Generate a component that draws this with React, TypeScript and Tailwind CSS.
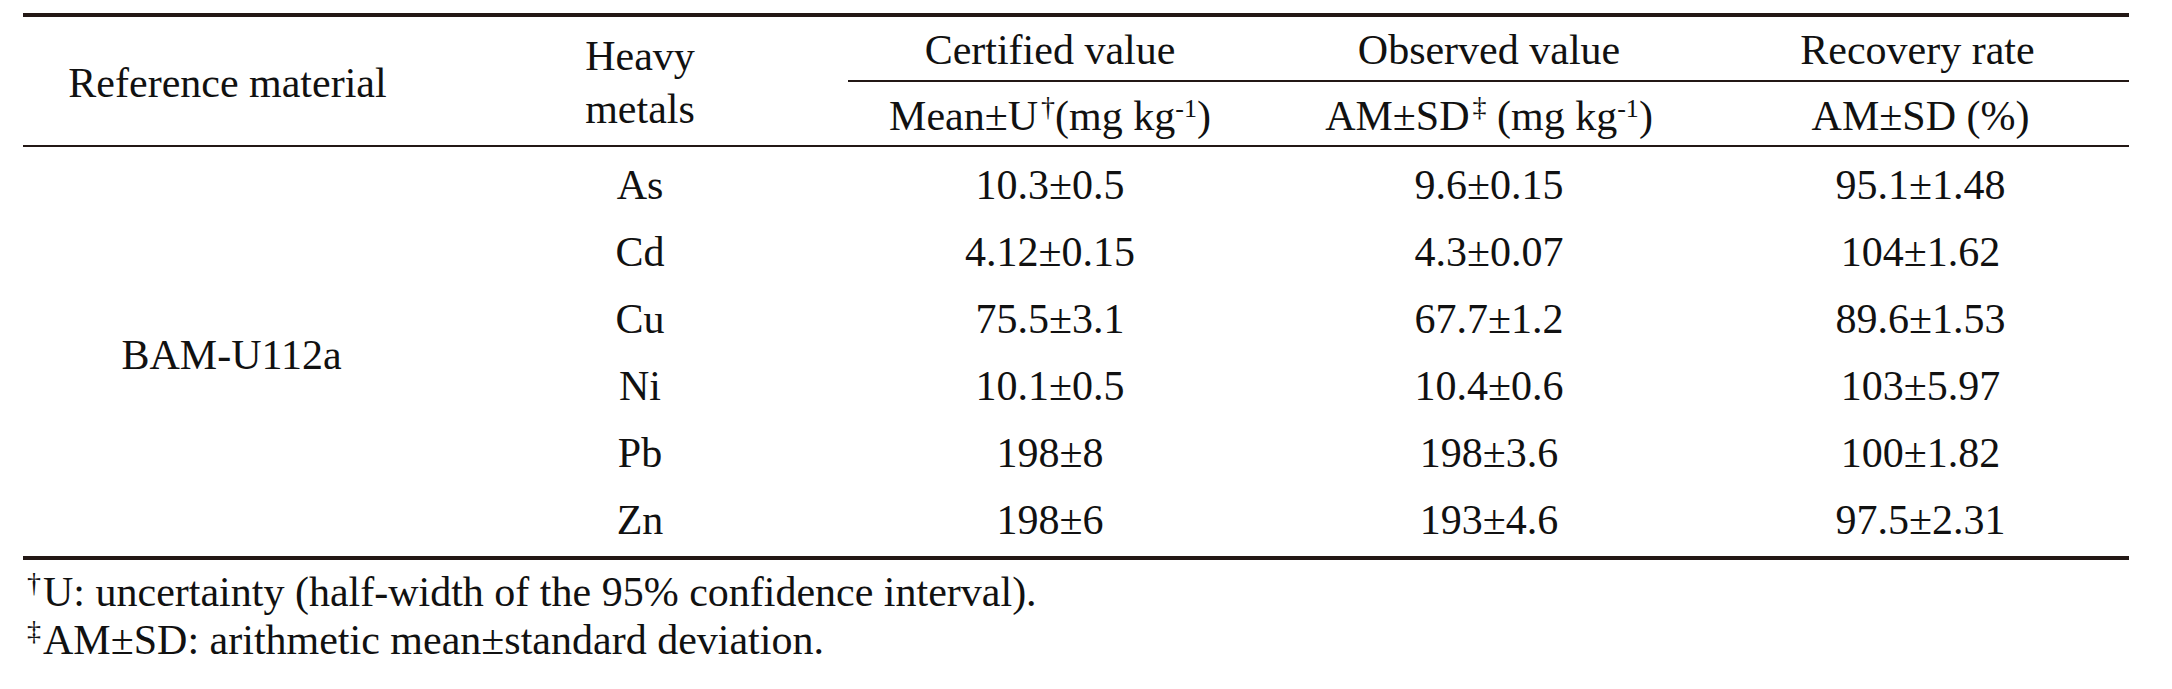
import React from "react";

const rows = [
  { metal: "As", certified: "10.3±0.5", observed: "9.6±0.15", recovery: "95.1±1.48" },
  { metal: "Cd", certified: "4.12±0.15", observed: "4.3±0.07", recovery: "104±1.62" },
  { metal: "Cu", certified: "75.5±3.1", observed: "67.7±1.2", recovery: "89.6±1.53" },
  { metal: "Ni", certified: "10.1±0.5", observed: "10.4±0.6", recovery: "103±5.97" },
  { metal: "Pb", certified: "198±8", observed: "198±3.6", recovery: "100±1.82" },
  { metal: "Zn", certified: "198±6", observed: "193±4.6", recovery: "97.5±2.31" },
];

const cols = "grid grid-cols-[409px_416px_404px_474px_403px]";

export default function App() {
  return (
    <div className="w-[2172px] h-[689px] bg-white text-[#111] text-[42px] leading-[1.2] font-['Liberation_Serif','Times_New_Roman',serif]">
      <div className="ml-[23px] w-[2106px] pt-[13px]">
        {/* Header */}
        <div className={`${cols} border-t-4 border-b-2 border-[#231815]`}>
          <div className="flex items-center justify-center pt-[4px]">Reference material</div>
          <div className="flex flex-col items-center justify-center leading-[53px] pt-[4px]">
            <span>Heavy</span>
            <span>metals</span>
          </div>
          <div className="col-span-3 flex flex-col">
            <div className="grid grid-cols-[404px_474px_403px] h-[65px] border-b-2 border-[#231815] items-center">
              <div className="text-center pt-[4px]">Certified value</div>
              <div className="text-center pt-[4px]">Observed value</div>
              <div className="text-center pt-[4px] pr-[20px]">Recovery rate</div>
            </div>
            <div className="grid grid-cols-[404px_474px_403px] h-[63px] items-center">
              <div className="text-center pt-[6px]">
                Mean±U<sup className="text-[28px] ml-[3px]">†</sup>(mg kg<sup className="text-[26px]">-1</sup>)
              </div>
              <div className="text-center pt-[6px]">
                AM±SD<sup className="text-[28px] ml-[3px]">‡</sup> (mg kg<sup className="text-[26px]">-1</sup>)
              </div>
              <div className="text-center pt-[6px] pr-[14px]">AM±SD (%)</div>
            </div>
          </div>
        </div>

        {/* Body */}
        <div className={`${cols} pt-[5px] pb-[2px] border-b-4 border-[#231815]`}>
          <div className="row-span-6 flex items-center justify-center pl-[8px] pt-[4px]">BAM-U112a</div>
          {rows.map((r) => (
            <React.Fragment key={r.metal}>
              <div className="h-[67px] flex items-center justify-center">{r.metal}</div>
              <div className="h-[67px] flex items-center justify-center">{r.certified}</div>
              <div className="h-[67px] flex items-center justify-center">{r.observed}</div>
              <div className="h-[67px] flex items-center justify-center pr-[14px]">{r.recovery}</div>
            </React.Fragment>
          ))}
        </div>

        {/* Footnotes */}
        <div className="pl-[4px] pt-[8px] leading-[48px]">
          <p>
            <sup className="text-[28px] mr-[2px]">†</sup>U: uncertainty (half-width of the 95% confidence interval).
          </p>
          <p>
            <sup className="text-[28px] mr-[2px]">‡</sup>AM±SD: arithmetic mean±standard deviation.
          </p>
        </div>
      </div>
    </div>
  );
}
